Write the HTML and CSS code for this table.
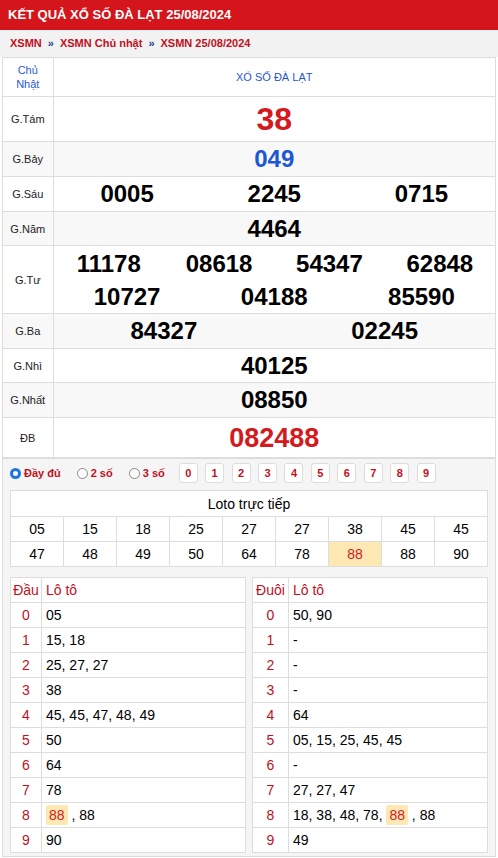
FILE: index.html
```html
<!DOCTYPE html>
<html lang="vi">
<head>
<meta charset="utf-8">
<link rel="stylesheet" href="styles.css">
</head>
<body>
<div class="page">
  <h1 class="title">KẾT QUẢ XỔ SỐ ĐÀ LẠT 25/08/2024</h1>
  <div class="crumbs"><a>XSMN</a><span class="sep">»</span><a>XSMN Chủ nhật</a><span class="sep">»</span><a>XSMN 25/08/2024</a></div>
  <div class="box">
    <table class="kq">
      <tr class="r-head"><td class="lbl day">Chủ<br>Nhật</td><td class="prov">XỔ SỐ ĐÀ LẠT</td></tr>
      <tr class="r-8"><td class="lbl">G.Tám</td><td><div class="nums n1"><span class="g8">38</span></div></td></tr>
      <tr class="h35 alt"><td class="lbl">G.Bảy</td><td><div class="nums n1"><span class="g7">049</span></div></td></tr>
      <tr class="h35"><td class="lbl">G.Sáu</td><td><div class="nums n3"><span>0005</span><span>2245</span><span>0715</span></div></td></tr>
      <tr class="h34 alt"><td class="lbl">G.Năm</td><td><div class="nums n1"><span>4464</span></div></td></tr>
      <tr class="r-4"><td class="lbl">G.Tư</td><td><div class="nums n4"><span>11178</span><span>08618</span><span>54347</span><span>62848</span></div><div class="nums n3"><span>10727</span><span>04188</span><span>85590</span></div></td></tr>
      <tr class="h35 alt"><td class="lbl">G.Ba</td><td><div class="nums n2"><span>84327</span><span>02245</span></div></td></tr>
      <tr class="h34"><td class="lbl">G.Nhì</td><td><div class="nums n1"><span>40125</span></div></td></tr>
      <tr class="h35 alt"><td class="lbl">G.Nhất</td><td><div class="nums n1"><span>08850</span></div></td></tr>
      <tr class="r-db"><td class="lbl">ĐB</td><td><div class="nums n1"><span class="db">082488</span></div></td></tr>
    </table>
    <div class="filter">
      <label class="opt on"><span class="radio"></span>Đầy đủ</label>
      <label class="opt"><span class="radio"></span>2 số</label>
      <label class="opt last"><span class="radio"></span>3 số</label>
      <div class="digits"><span>0</span><span>1</span><span>2</span><span>3</span><span>4</span><span>5</span><span>6</span><span>7</span><span>8</span><span>9</span></div>
    </div>
    <div class="loto-area">
      <table class="loto">
        <tr><th colspan="9">Loto trực tiếp</th></tr>
        <tr><td>05</td><td>15</td><td>18</td><td>25</td><td>27</td><td>27</td><td>38</td><td>45</td><td>45</td></tr>
        <tr><td>47</td><td>48</td><td>49</td><td>50</td><td>64</td><td>78</td><td class="hl">88</td><td>88</td><td>90</td></tr>
      </table>
      <div class="dd">
        <table class="ht">
          <tr><th class="k k1">Đầu</th><th>Lô tô</th></tr>
          <tr><td class="k">0</td><td>05</td></tr>
          <tr><td class="k">1</td><td>15, 18</td></tr>
          <tr><td class="k">2</td><td>25, 27, 27</td></tr>
          <tr><td class="k">3</td><td>38</td></tr>
          <tr><td class="k">4</td><td>45, 45, 47, 48, 49</td></tr>
          <tr><td class="k">5</td><td>50</td></tr>
          <tr><td class="k">6</td><td>64</td></tr>
          <tr><td class="k">7</td><td>78</td></tr>
          <tr><td class="k">8</td><td><span class="mark">88</span> , 88</td></tr>
          <tr><td class="k">9</td><td>90</td></tr>
        </table>
        <table class="ht">
          <tr><th class="k k2">Đuôi</th><th>Lô tô</th></tr>
          <tr><td class="k">0</td><td>50, 90</td></tr>
          <tr><td class="k">1</td><td>-</td></tr>
          <tr><td class="k">2</td><td>-</td></tr>
          <tr><td class="k">3</td><td>-</td></tr>
          <tr><td class="k">4</td><td>64</td></tr>
          <tr><td class="k">5</td><td>05, 15, 25, 45, 45</td></tr>
          <tr><td class="k">6</td><td>-</td></tr>
          <tr><td class="k">7</td><td>27, 27, 47</td></tr>
          <tr><td class="k">8</td><td>18, 38, 48, 78, <span class="mark">88</span> , 88</td></tr>
          <tr><td class="k">9</td><td>49</td></tr>
        </table>
      </div>
    </div>
  </div>
</div>
</body>
</html>
```

FILE: styles.css
```css
* { box-sizing: border-box; }
body { margin: 0; font-family: "Liberation Sans", Arial, sans-serif; color: #000; background: #fff; }
.page { width: 498px; }
.title { margin: 0; height: 30px; line-height: 30px; padding-left: 8px; background: #d4161c; color: #fff; font-size: 13px; font-weight: bold; }
.crumbs { height: 27px; line-height: 27px; padding-left: 10px; background: #f2f2f2; font-size: 11px; font-weight: bold; }
.crumbs a { color: #c0101e; }
.crumbs .sep { color: #1b3f8a; margin: 0 6px; }
.box { margin: 0 2px; border: 1px solid #ddd; border-top: none; background: #f5f5f5; }
.kq { width: 100%; border-collapse: collapse; background: #fff; }
.kq td { border: 1px solid #ddd; padding: 0; text-align: center; vertical-align: middle; }
.kq td:first-child { border-left: none; }
.kq td:last-child { border-right: none; }
.kq .lbl { width: 50px; font-size: 11px; color: #222; }
.kq .day { color: #2a5bd7; line-height: 14px; }
.kq .prov { color: #1f56cf; font-size: 11px; }
.kq tr.alt td { background: #f8f8f8; }
.r-head { height: 39px; }
.r-8 { height: 45px; }
.h35 { height: 35px; }
.h34 { height: 34px; }
.r-4 { height: 68px; }
.r-db { height: 40px; }
.nums { display: grid; font-weight: bold; font-size: 24px; line-height: 26px; }
.r-4 .nums { line-height: 33px; }
.n1 { grid-template-columns: 1fr; }
.n2 { grid-template-columns: repeat(2, 1fr); }
.n3 { grid-template-columns: repeat(3, 1fr); }
.n4 { grid-template-columns: repeat(4, 1fr); }
.g8 { color: #d41a1f; font-size: 32px; line-height: 36px; }
.g7 { color: #1c57d4; }
.db { color: #d41a1f; font-size: 27px; line-height: 30px; }
.filter { display: flex; align-items: center; height: 29px; padding-left: 7px; font-size: 11px; font-weight: bold; border-top: 1px solid #ddd; }
.opt { display: flex; align-items: center; color: #c0101e; margin-right: 16px; }
.opt.last { margin-right: 14px; }
.radio { width: 11px; height: 11px; border: 1px solid #888; border-radius: 50%; margin-right: 3px; background: #fff; }
.opt.on .radio { border: 3px solid #1a73e8; background: #fff; }
.digits { display: flex; gap: 7.45px; }
.digits span { width: 19px; height: 20px; line-height: 19px; text-align: center; border: 1px solid #ddd; border-radius: 3px; background: #fff; color: #c0101e; font-size: 11px; }
.loto-area { padding: 3px 7px 3px 7px; }
.loto { width: 100%; border-collapse: collapse; background: #fff; table-layout: fixed; }
.loto th { height: 26px; font-size: 14px; font-weight: normal; border: 1px solid #ddd; }
.loto td { height: 25px; border: 1px solid #ddd; text-align: center; font-size: 14px; }
.loto td.hl { background: #fde8b4; color: #d41a1f; }
.dd { display: flex; justify-content: space-between; margin-top: 10px; }
.ht { width: 236px; border-collapse: collapse; background: #fff; }
.ht th, .ht td { height: 25px; border: 1px solid #ddd; font-size: 14px; text-align: left; padding: 0 0 0 4px; }
.ht th { font-weight: normal; color: #c0101e; }
.ht .k { text-align: center; padding: 0; color: #c0101e; }
.ht .k1 { width: 31px; }
.ht .k2 { width: 36px; }
.mark { display: inline-block; background: #fde8b4; color: #d41a1f; padding: 2px 3px; border-radius: 2px; }
```
